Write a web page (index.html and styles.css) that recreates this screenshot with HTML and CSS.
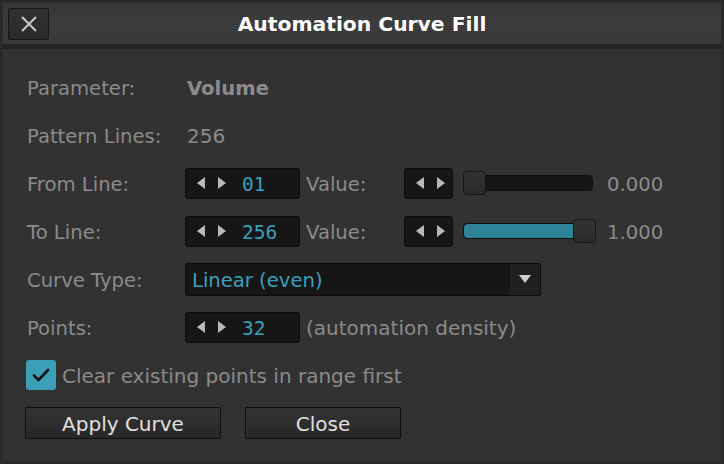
FILE: index.html
```html
<!DOCTYPE html>
<html>
<head>
<meta charset="utf-8">
<link rel="stylesheet" href="styles.css">
</head>
<body>
<div class="window">
  <header class="titlebar">
    <button class="close-x" aria-label="Close">
      <svg width="18" height="18" viewBox="0 0 18 18"><path d="M2 2 L16 16 M16 2 L2 16" stroke="#c8c8c8" stroke-width="2" fill="none"/></svg>
    </button>
    <h1 class="title">Automation Curve Fill</h1>
  </header>
  <div class="sep"></div>
  <main class="panel">
    <div class="form">
      <div class="row">
        <span class="label">Parameter:</span>
        <span class="strong">Volume</span>
      </div>
      <div class="row">
        <span class="label">Pattern Lines:</span>
        <span class="plain">256</span>
      </div>
      <div class="row">
        <span class="label">From Line:</span>
        <div class="spin"><span class="arrows"><i class="tri-l"></i><i class="tri-r"></i></span><span class="num">01</span></div>
        <span class="vlabel">Value:</span>
        <div class="spin small"><span class="arrows"><i class="tri-l"></i><i class="tri-r"></i></span></div>
        <div class="slider"><div class="fill" style="width:0%"></div><div class="thumb thumb-start"></div></div>
        <span class="val">0.000</span>
      </div>
      <div class="row">
        <span class="label">To Line:</span>
        <div class="spin"><span class="arrows"><i class="tri-l"></i><i class="tri-r"></i></span><span class="num">256</span></div>
        <span class="vlabel">Value:</span>
        <div class="spin small"><span class="arrows"><i class="tri-l"></i><i class="tri-r"></i></span></div>
        <div class="slider"><div class="fill" style="width:100%"></div><div class="thumb thumb-end"></div></div>
        <span class="val">1.000</span>
      </div>
      <div class="row">
        <span class="label">Curve Type:</span>
        <div class="combo"><span class="combo-text">Linear (even)</span><span class="combo-btn"><i class="tri-d"></i></span></div>
      </div>
      <div class="row">
        <span class="label">Points:</span>
        <div class="spin"><span class="arrows"><i class="tri-l"></i><i class="tri-r"></i></span><span class="num">32</span></div>
        <span class="vlabel auto">(automation density)</span>
      </div>
      <div class="row check-row">
        <span class="checkbox"><svg width="18" height="14" viewBox="0 0 18 14"><path d="M2 7.5 L6.5 12 L16 2" stroke="#111" stroke-width="2.6" fill="none" stroke-linecap="round" stroke-linejoin="round"/></svg></span>
        <span class="check-label">Clear existing points in range first</span>
      </div>
      <div class="row buttons">
        <button class="btn apply">Apply Curve</button>
        <button class="btn close">Close</button>
      </div>
    </div>
  </main>
</div>
</body>
</html>
```

FILE: styles.css
```css
* { box-sizing: border-box; }
html, body { margin: 0; padding: 0; }
body {
  width: 724px;
  height: 464px;
  background: #2a2a2a;
  font-family: "DejaVu Sans", sans-serif;
  overflow: hidden;
}
.window {
  display: flex;
  flex-direction: column;
  height: 464px;
  padding: 2px;
}
.titlebar {
  height: 43px;
  flex: none;
  display: flex;
  align-items: center;
  position: relative;
  background: linear-gradient(#363636, #3c3c3c 50%, #383838);
  border: 1px solid #2c2c2c;
  border-bottom-color: #252525;
}
.close-x {
  position: absolute;
  left: 5px;
  top: 5px;
  width: 41px;
  height: 32px;
  padding: 0;
  display: flex;
  align-items: center;
  justify-content: center;
  background: linear-gradient(#313131, #2a2a2a);
  border: 1px solid #161616;
  border-radius: 2px;
}
.title {
  flex: 1;
  margin: 0;
  text-align: center;
  color: #ffffff;
  font-size: 20.3px;
  font-weight: bold;
  line-height: 1;
  padding-top: 2px;
}
.sep {
  height: 4px;
  flex: none;
  background: #232323;
}
.panel {
  flex: 1;
  background: #323232;
  border-left: 1px solid #2c2c2c;
  border-right: 1px solid #2c2c2c;
  border-bottom: 1px solid #2c2c2c;
  padding: 14px 0 0 22px;
}
.form {
  display: flex;
  flex-direction: column;
}
.row {
  height: 48px;
  display: flex;
  align-items: center;
  color: #8b8b8b;
  font-size: 20px;
}
.row > span { padding-top: 2px; }
.label {
  width: 160px;
  flex: none;
  padding-left: 2px;
  font-size: 19.6px;
}
.strong { font-weight: bold; padding-left: 2px; font-size: 19.6px; }
.plain { padding-left: 2px; }
.spin {
  width: 115px;
  height: 31px;
  flex: none;
  display: flex;
  align-items: center;
  background: #161616;
  border: 1px solid #0c0c0c;
  border-radius: 3px;
}
.spin.small { width: 49px; }
.arrows {
  display: flex;
  align-items: center;
  gap: 13px;
  padding-left: 11px;
}
.tri-l, .tri-r {
  width: 0;
  height: 0;
  border-top: 6px solid transparent;
  border-bottom: 6px solid transparent;
}
.tri-l { border-right: 8px solid #b8b8b8; }
.tri-r { border-left: 8px solid #b8b8b8; }
.num {
  font-family: "DejaVu Sans Mono", monospace;
  color: #3ba0bd;
  font-size: 19.5px;
  margin-left: 16px;
  padding-top: 2px;
}
.vlabel { margin-left: 6px; width: 98px; flex: none; font-size: 19.6px; }
.vlabel.auto { width: auto; font-size: 20px; }
.slider {
  position: relative;
  width: 130px;
  height: 16px;
  flex: none;
  margin-left: 10px;
  background: #161616;
  border: 1px solid #111;
  border-radius: 4px;
}
.fill {
  height: 100%;
  background: #2f8398;
  border-radius: 4px;
}
.thumb {
  position: absolute;
  top: -5px;
  width: 23px;
  height: 24px;
  background: linear-gradient(#343434, #2a2a2a);
  border: 1px solid #161616;
  border-radius: 4px;
}
.thumb-start { left: -1px; }
.thumb-end { right: -4px; }
.val { margin-left: 14px; font-size: 19.6px; }
.combo {
  width: 356px;
  height: 33px;
  display: flex;
  background: #161616;
  border: 1px solid #0c0c0c;
  border-radius: 2px;
}
.combo-text {
  flex: 1;
  display: flex;
  align-items: center;
  padding-left: 6px;
  padding-top: 2px;
  color: #3ba0bd;
  font-size: 19.6px;
}
.combo-btn {
  width: 30px;
  display: flex;
  align-items: center;
  justify-content: center;
  background: #202020;
}
.tri-d {
  width: 0;
  height: 0;
  border-left: 6px solid transparent;
  border-right: 6px solid transparent;
  border-top: 8px solid #cfcfcf;
}
.check-row { gap: 6px; }
.checkbox {
  width: 30px;
  height: 30px;
  display: flex;
  align-items: center;
  justify-content: center;
  background: #3b9fb8;
  border-radius: 3px;
  margin-left: 1px;
  padding-top: 0 !important;
}
.buttons { gap: 24px; }
.btn {
  height: 32px;
  font-family: "DejaVu Sans", sans-serif;
  font-size: 20px;
  color: #e0e0e0;
  background: linear-gradient(#333333, #282828);
  border: 1px solid #101010;
  border-radius: 1px;
  padding: 2px 0 0;
}
.apply { width: 196px; }
.close { width: 156px; }
```
